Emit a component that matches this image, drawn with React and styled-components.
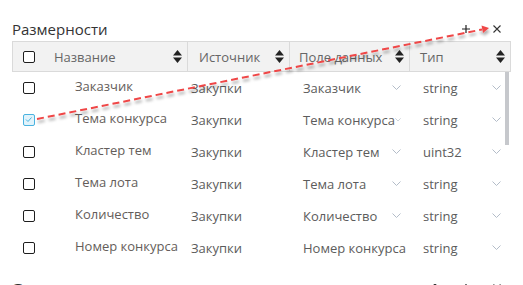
import React from 'react';
import styled, { createGlobalStyle } from 'styled-components';

const GlobalStyle = createGlobalStyle`
  html, body {
    margin: 0;
    padding: 0;
    background: #ffffff;
  }
  body {
    font-family: "Open Sans", "Liberation Sans", sans-serif;
  }
`;

const Page = styled.div`
  position: relative;
  width: 523px;
  height: 285px;
  overflow: hidden;
  box-sizing: border-box;
  padding: 0 12px;
`;

const SectionHead = styled.div`
  display: flex;
  align-items: center;
  justify-content: space-between;
  height: 25px;
  padding-top: ${(p) => p.$top}px;
`;

const Title = styled.div`
  font-size: 15px;
  line-height: 20px;
  color: #333333;
`;

const Tools = styled.div`
  display: flex;
  align-items: center;
  gap: 23px;
  padding-right: 10px;
`;

const ToolIcon = styled.svg`
  display: block;
  width: 8px;
  height: 8px;
`;

const Table = styled.div`
  width: 499px;
`;

const Grid = styled.div`
  display: grid;
  grid-template-columns: 175px 102px 120px 1fr;
`;

const HeadRow = styled(Grid)`
  height: 29px;
  background: #f2f2f2;
  border: 1px solid #dadada;
`;

const HeadCell = styled.div`
  display: flex;
  align-items: center;
  padding: 0 5px 0 ${(p) => p.$left}px;
  border-right: ${(p) => (p.$last ? 'none' : '1px solid #dadada')};
  font-size: 13px;
  color: #666666;
  min-width: 0;
`;

const HeadLabel = styled.span`
  flex: 1;
  margin-left: ${(p) => p.$gap || 0}px;
  white-space: nowrap;
`;

const Body = styled.div`
  position: relative;
  padding-left: 1px;
`;

const Row = styled(Grid)`
  height: 32px;
`;

const Cell = styled.div`
  display: flex;
  align-items: center;
  padding: 0 ${(p) => p.$right || 0}px 0 ${(p) => p.$left}px;
  font-size: 13px;
  color: #5c5c5c;
  white-space: nowrap;
  overflow: hidden;
  min-width: 0;
`;

const NameText = styled.span`
  margin-left: 40px;
  color: #645d5a;
  transform: translateY(-2px);
`;

const Value = styled.span`
  flex: 1;
  overflow: visible;
`;

const Box = styled.span`
  display: inline-block;
  box-sizing: border-box;
  width: 12px;
  height: 12px;
  flex: none;
  border-radius: 2px;
  border: 1.5px solid ${(p) => (p.$checked ? '#4ab3e0' : '#1e1e1e')};
  background: ${(p) => (p.$checked ? '#e1f3fb' : '#ffffff')};
  position: relative;
`;

const Thumb = styled.div`
  position: absolute;
  right: 2px;
  top: 0;
  width: 4px;
  height: 73px;
  background: #c6c8cc;
`;

const Overlay = styled.svg`
  position: absolute;
  left: 0;
  top: 0;
  pointer-events: none;
`;

function Checkbox({ checked }) {
  return (
    <Box $checked={checked}>
      {checked && (
        <svg width="9" height="9" viewBox="0 0 9 9" style={{ position: 'absolute', left: 0, top: 0 }}>
          <polyline points="2,4.5 4,6.5 7.5,2.5" fill="none" stroke="#4ab3e0" strokeWidth="1" />
        </svg>
      )}
    </Box>
  );
}

function SortIcon() {
  return (
    <svg width="9" height="13" viewBox="0 0 9 13">
      <polygon points="0,5.5 4.5,0 9,5.5" fill="#222" />
      <polygon points="0,7.5 4.5,13 9,7.5" fill="#222" />
    </svg>
  );
}

function Chevron() {
  return (
    <svg width="9" height="6" viewBox="0 0 9 6">
      <polyline points="0.5,0.5 4.5,4.5 8.5,0.5" fill="none" stroke="#b3bcc8" strokeWidth="1" />
    </svg>
  );
}

function PlusIcon() {
  return (
    <ToolIcon viewBox="0 0 8 8">
      <path d="M4 0V8M0 4H8" stroke="#222" strokeWidth="1.2" />
    </ToolIcon>
  );
}

function CloseIcon() {
  return (
    <ToolIcon viewBox="0 0 8 8">
      <path d="M0.5 0.5L7.5 7.5M7.5 0.5L0.5 7.5" stroke="#333" strokeWidth="1.1" />
    </ToolIcon>
  );
}

function UploadIcon() {
  return (
    <ToolIcon viewBox="0 0 8 8">
      <path d="M4 0V8M1 3L4 0L7 3" stroke="#333" strokeWidth="1.1" fill="none" />
    </ToolIcon>
  );
}

const rows = [
  { name: 'Заказчик', field: 'Заказчик', type: 'string' },
  { name: 'Тема конкурса', field: 'Тема конкурса', type: 'string', checked: true },
  { name: 'Кластер тем', field: 'Кластер тем', type: 'uint32' },
  { name: 'Тема лота', field: 'Тема лота', type: 'string' },
  { name: 'Количество', field: 'Количество', type: 'string' },
  { name: 'Номер конкурса', field: 'Номер конкурса', type: 'string' },
];

function Arrow() {
  return (
    <Overlay width="523" height="285" viewBox="0 0 523 285">
      <defs>
        <filter id="shade" x="-10%" y="-50%" width="120%" height="200%">
          <feDropShadow dx="1" dy="3" stdDeviation="1.6" floodColor="#000" floodOpacity="0.35" />
        </filter>
      </defs>
      <g filter="url(#shade)">
        <line x1="37" y1="119" x2="482" y2="29.5" stroke="#ef4646" strokeWidth="2" strokeDasharray="7 4" />
        <polygon points="489,28 481.5,25.5 483,33" fill="#ef4646" />
      </g>
    </Overlay>
  );
}

export default function App() {
  return (
    <>
      <GlobalStyle />
      <Page>
        <SectionHead $top={16}>
          <Title>Размерности</Title>
          <Tools>
            <PlusIcon />
            <CloseIcon />
          </Tools>
        </SectionHead>
        <Table>
          <HeadRow>
            <HeadCell $left={10}>
              <Checkbox />
              <HeadLabel $gap={19}>Название</HeadLabel>
              <SortIcon />
            </HeadCell>
            <HeadCell $left={11}>
              <HeadLabel>Источник</HeadLabel>
              <SortIcon />
            </HeadCell>
            <HeadCell $left={9}>
              <HeadLabel>Поле данных</HeadLabel>
              <SortIcon />
            </HeadCell>
            <HeadCell $left={10} $last>
              <HeadLabel>Тип</HeadLabel>
              <SortIcon />
            </HeadCell>
          </HeadRow>
          <Body>
            {rows.map((r) => (
              <Row key={r.name}>
                <Cell $left={10}>
                  <Checkbox checked={r.checked} />
                  <NameText>{r.name}</NameText>
                </Cell>
                <Cell $left={3}>
                  <Value>Закупки</Value>
                </Cell>
                <Cell $left={13} $right={9}>
                  <Value>{r.field}</Value>
                  <Chevron />
                </Cell>
                <Cell $left={13} $right={10}>
                  <Value>{r.type}</Value>
                  <Chevron />
                </Cell>
              </Row>
            ))}
            <Thumb />
          </Body>
        </Table>
        <SectionHead $top={11}>
          <Title>Факты</Title>
          <Tools>
            <UploadIcon />
            <PlusIcon />
            <CloseIcon />
          </Tools>
        </SectionHead>
        <Arrow />
      </Page>
    </>
  );
}
